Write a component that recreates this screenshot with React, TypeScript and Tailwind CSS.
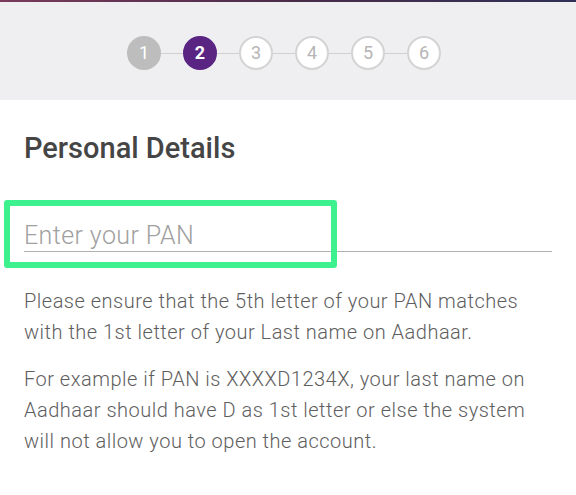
import React, { FC } from "react";

const steps = [1, 2, 3, 4, 5, 6];

const Stepper: FC<{ current: number }> = ({ current }) => (
  <div className="flex items-center justify-center pr-2">
    {steps.map((n, i) => {
      const circle =
        n < current
          ? "bg-[#bdbdbd] text-white border-[#bdbdbd]"
          : n === current
            ? "bg-[#5a2483] text-white border-[#5a2483] font-bold"
            : "bg-white text-[#b5b5b5] border-[#d4d4d4]";
      return (
        <React.Fragment key={n}>
          {i > 0 && <div className="w-[22px] h-px bg-[#d0d0d0]" />}
          <div
            className={`w-[34px] h-[34px] rounded-full border-2 flex items-center justify-center text-[18px] leading-none ${circle}`}
          >
            {n}
          </div>
        </React.Fragment>
      );
    })}
  </div>
);

export const App: FC = () => {
  return (
    <div className="w-[576px] h-[495px] bg-white font-['Roboto',sans-serif] overflow-hidden">
      <div className="h-[2px] bg-gradient-to-r from-[#7a3a5c] via-[#4a2c4a] to-[#2f2f55]"></div>
      <header className="h-[98px] bg-[#efeff2] pt-[34px]">
        <Stepper current={2} />
      </header>

      <main className="px-6">
        <h1 className="mt-[31px] text-[29px] leading-[34px] font-medium text-[#454545]">
          Personal Details
        </h1>

        <div className="relative mt-[58px]">
          <div className="absolute left-[-20px] top-[-23px] w-[333px] h-[68px] border-[6px] border-[#3ef18f] rounded-[3px]"></div>
          <input
            className="w-full border-b border-[#b0b0b0] pb-[2px] text-[25px] leading-[26px] tracking-[0.4px] font-light text-[#444] placeholder:text-[#a0a0a0] outline-none bg-transparent"
            placeholder="Enter your PAN"
          />
        </div>

        <div className="mt-[34px] text-[20px] leading-[31px] tracking-[0.5px] font-light text-[#5e5e5e] whitespace-nowrap">
          <p>
            Please ensure that the 5th letter of your PAN matches
            <br />
            with the 1st letter of your Last name on Aadhaar.
          </p>
          <p className="mt-[16px]">
            For example if PAN is XXXXD1234X, your last name on
            <br />
            Aadhaar should have D as 1st letter or else the system
            <br />
            will not allow you to open the account.
          </p>
        </div>
      </main>
    </div>
  );
};

export default App;
